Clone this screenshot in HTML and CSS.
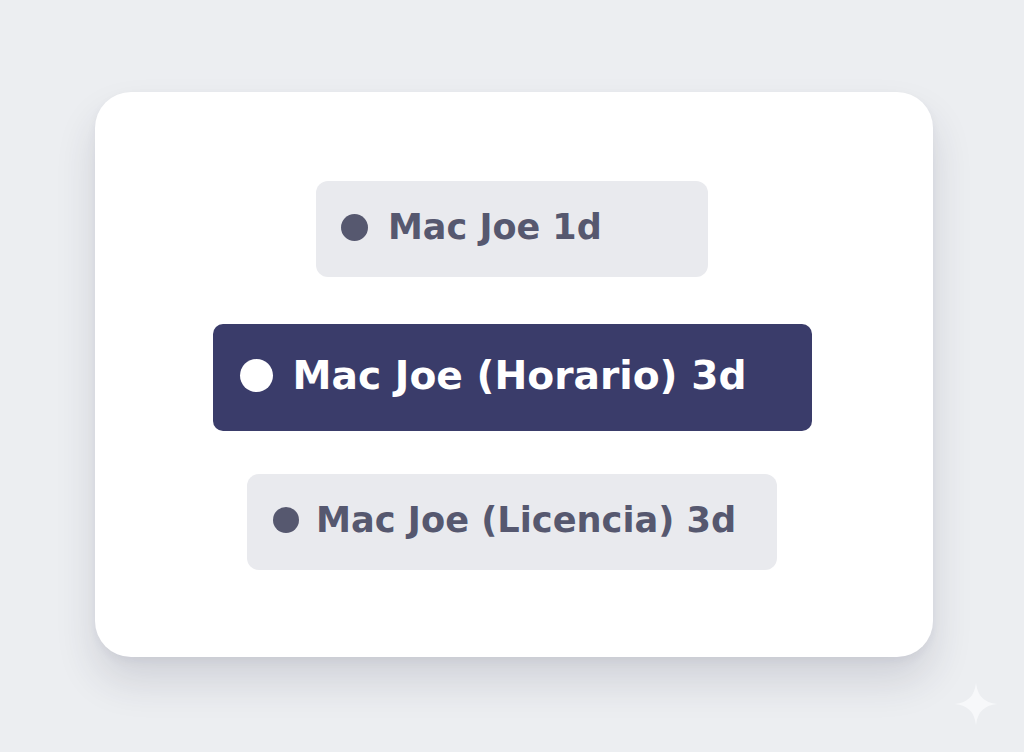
FILE: index.html
```html
<!DOCTYPE html>
<html lang="es">
<head>
<meta charset="utf-8">
<title>Mac Joe</title>
<link rel="stylesheet" href="styles.css">
</head>
<body>
<main class="card">
  <div class="pill pill-1"><span class="dot"></span><span class="label">Mac Joe 1d</span></div>
  <div class="pill pill-2 active"><span class="dot"></span><span class="label">Mac Joe (Horario) 3d</span></div>
  <div class="pill pill-3"><span class="dot"></span><span class="label">Mac Joe (Licencia) 3d</span></div>
</main>
<svg class="sparkle" width="44" height="44" viewBox="0 0 44 44" aria-hidden="true">
  <path d="M22 1 C23.5 14 30 20.5 43 22 C30 23.5 23.5 30 22 43 C20.5 30 14 23.5 1 22 C14 20.5 20.5 14 22 1 Z" fill="#f7f8fa"/>
</svg>
</body>
</html>
```
FILE: styles.css
```css
html, body {
  margin: 0;
  padding: 0;
}
body {
  width: 1024px;
  height: 752px;
  background: #eceef1;
  position: relative;
  overflow: hidden;
  font-family: "DejaVu Sans", "Liberation Sans", sans-serif;
}
.card {
  box-sizing: border-box;
  margin: 92px 0 0 95px;
  width: 838px;
  height: 565px;
  background: #ffffff;
  border-radius: 36px;
  box-shadow: 0 24px 40px rgba(40, 45, 70, 0.14), 0 4px 10px rgba(40, 45, 70, 0.05);
  display: flex;
  flex-direction: column;
  align-items: center;
  padding: 89px 4px 0 0;
}
.pill {
  box-sizing: border-box;
  display: flex;
  align-items: center;
  background: #e9eaee;
  border-radius: 12px;
  color: #56586f;
  font-weight: 700;
  white-space: nowrap;
  padding-bottom: 4px;
}
.pill .dot {
  flex: none;
  border-radius: 50%;
  background: #56586f;
}
.pill-1 {
  width: 392px;
  height: 96px;
  padding-left: 25px;
  font-size: 35px;
}
.pill-1 .dot {
  width: 27px;
  height: 27px;
  margin-right: 20px;
}
.pill-2 {
  width: 599px;
  height: 107px;
  margin-top: 47px;
  padding-left: 27px;
  font-size: 39.2px;
  background: #3a3c6a;
  color: #ffffff;
  border-radius: 10px;
}
.pill-2 .dot {
  width: 33px;
  height: 33px;
  margin-right: 20px;
  background: #ffffff;
}
.pill-3 {
  width: 530px;
  height: 96px;
  margin-top: 43px;
  padding-left: 26px;
  font-size: 35.2px;
}
.pill-3 .dot {
  width: 26px;
  height: 26px;
  margin-right: 17px;
}
.label {
  line-height: 1;
}
.sparkle {
  position: absolute;
  left: 954px;
  top: 682px;
}
```
